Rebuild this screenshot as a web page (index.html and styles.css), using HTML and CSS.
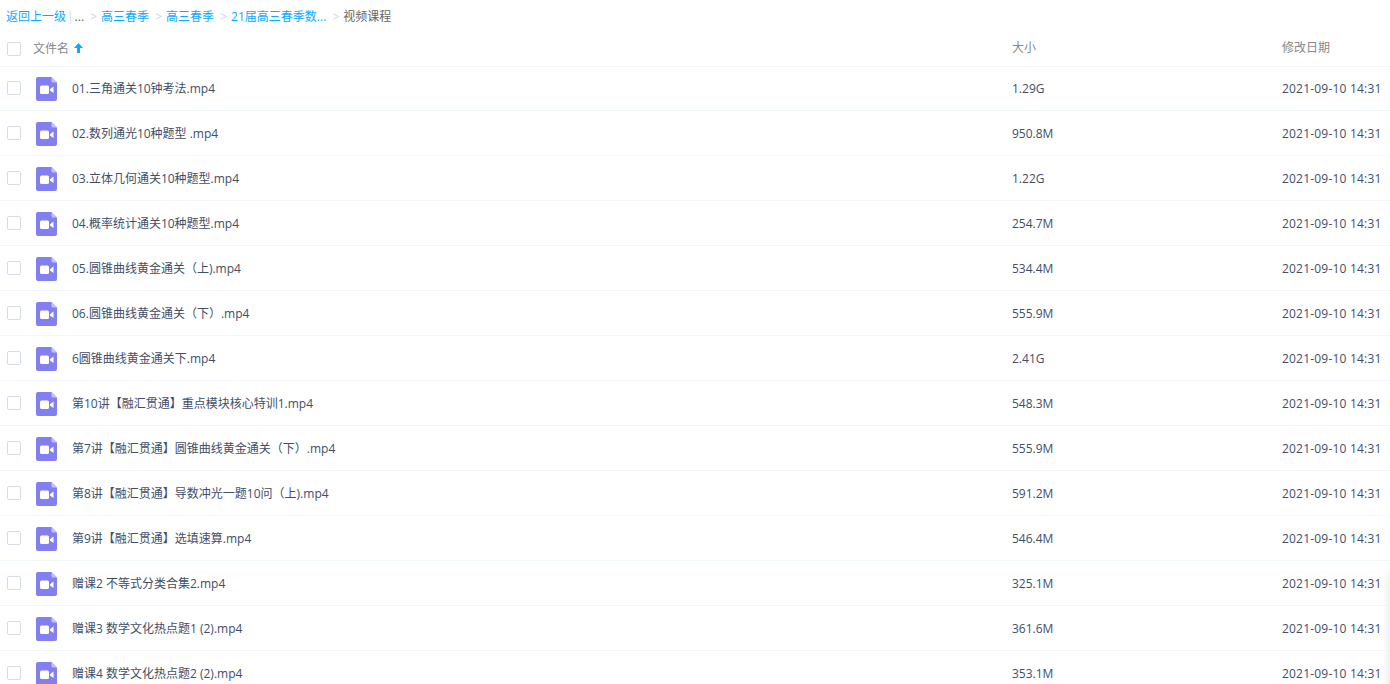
FILE: index.html
```html
<!DOCTYPE html>
<html lang="zh-CN">
<head>
  <meta charset="UTF-8" />
  <title>视频课程</title>
  <link rel="stylesheet" href="styles.css">
</head>
<body>

<svg class="defs" width="0" height="0">
  <symbol id="videoIcon" viewBox="0 0 21 24">
    <path d="M2 0H15.5L21 5.5V22a2 2 0 0 1-2 2H2a2 2 0 0 1-2-2V2a2 2 0 0 1 2-2z" fill="#8280f0"/>
    <path d="M15.5 0L21 5.5H17a1.5 1.5 0 0 1-1.5-1.5z" fill="#c3c2f8"/>
    <rect x="4" y="8.5" width="9" height="8.5" rx="1.5" fill="#fff"/>
    <path d="M14 12.2L17.5 9.6V16L14 13.6z" fill="#fff"/>
  </symbol>
</svg>

<div class="crumbs">
  <a href="#">返回上一级</a><span class="bar">|</span><span class="dots">...</span>
  <span class="sep">&gt;</span><a href="#">高三春季</a>
  <span class="sep">&gt;</span><a href="#">高三春季</a>
  <span class="sep">&gt;</span><a href="#">21届高三春季数...</a>
  <span class="sep">&gt;</span><span class="current">视频课程</span>
</div>

<div class="file-list">
  <div class="row head">
    <span class="check"></span>
    <span class="name">文件名 <span class="arrow">
      <svg width="9" height="10" viewBox="0 0 9 10"><path d="M4.5 0L9 5H6V10H3V5H0z" fill="#09aaff"/></svg>
    </span></span>
    <span class="size">大小</span>
    <span class="date">修改日期</span>
  </div>

  <div class="row"><span class="check"></span><svg class="icon"><use href="#videoIcon"/></svg><span class="name">01.三角通关10钟考法.mp4</span><span class="size">1.29G</span><span class="date">2021-09-10 14:31</span></div>
  <div class="row"><span class="check"></span><svg class="icon"><use href="#videoIcon"/></svg><span class="name">02.数列通光10种题型 .mp4</span><span class="size">950.8M</span><span class="date">2021-09-10 14:31</span></div>
  <div class="row"><span class="check"></span><svg class="icon"><use href="#videoIcon"/></svg><span class="name">03.立体几何通关10种题型.mp4</span><span class="size">1.22G</span><span class="date">2021-09-10 14:31</span></div>
  <div class="row"><span class="check"></span><svg class="icon"><use href="#videoIcon"/></svg><span class="name">04.概率统计通关10种题型.mp4</span><span class="size">254.7M</span><span class="date">2021-09-10 14:31</span></div>
  <div class="row"><span class="check"></span><svg class="icon"><use href="#videoIcon"/></svg><span class="name">05.圆锥曲线黄金通关（上).mp4</span><span class="size">534.4M</span><span class="date">2021-09-10 14:31</span></div>
  <div class="row"><span class="check"></span><svg class="icon"><use href="#videoIcon"/></svg><span class="name">06.圆锥曲线黄金通关（下）.mp4</span><span class="size">555.9M</span><span class="date">2021-09-10 14:31</span></div>
  <div class="row"><span class="check"></span><svg class="icon"><use href="#videoIcon"/></svg><span class="name">6圆锥曲线黄金通关下.mp4</span><span class="size">2.41G</span><span class="date">2021-09-10 14:31</span></div>
  <div class="row"><span class="check"></span><svg class="icon"><use href="#videoIcon"/></svg><span class="name">第10讲【融汇贯通】重点模块核心特训1.mp4</span><span class="size">548.3M</span><span class="date">2021-09-10 14:31</span></div>
  <div class="row"><span class="check"></span><svg class="icon"><use href="#videoIcon"/></svg><span class="name">第7讲【融汇贯通】圆锥曲线黄金通关（下）.mp4</span><span class="size">555.9M</span><span class="date">2021-09-10 14:31</span></div>
  <div class="row"><span class="check"></span><svg class="icon"><use href="#videoIcon"/></svg><span class="name">第8讲【融汇贯通】导数冲光一题10问（上).mp4</span><span class="size">591.2M</span><span class="date">2021-09-10 14:31</span></div>
  <div class="row"><span class="check"></span><svg class="icon"><use href="#videoIcon"/></svg><span class="name">第9讲【融汇贯通】选填速算.mp4</span><span class="size">546.4M</span><span class="date">2021-09-10 14:31</span></div>
  <div class="row"><span class="check"></span><svg class="icon"><use href="#videoIcon"/></svg><span class="name">赠课2 不等式分类合集2.mp4</span><span class="size">325.1M</span><span class="date">2021-09-10 14:31</span></div>
  <div class="row"><span class="check"></span><svg class="icon"><use href="#videoIcon"/></svg><span class="name">赠课3 数学文化热点题1 (2).mp4</span><span class="size">361.6M</span><span class="date">2021-09-10 14:31</span></div>
  <div class="row"><span class="check"></span><svg class="icon"><use href="#videoIcon"/></svg><span class="name">赠课4 数学文化热点题2 (2).mp4</span><span class="size">353.1M</span><span class="date">2021-09-10 14:31</span></div>
</div>

<div class="edge"></div>

</body>
</html>
```

FILE: styles.css
```css
html, body {
  height: 684px;
  overflow: hidden;
}
body {
  margin: 0;
  background-color: #fff;
  font-family: "Open Sans", "Noto Sans CJK SC", sans-serif;
  font-size: 12px;
  color: #424e67;
}
a {
  color: #09aaff;
  text-decoration: none;
}
.defs {
  position: absolute;
}
.crumbs {
  height: 33px;
  line-height: 33px;
  padding-left: 6px;
  color: #666;
  white-space: nowrap;
}
.crumbs .bar {
  color: #c4d8f4;
  margin: 0 1px;
}
.crumbs .sep {
  color: #c4d8f4;
  margin: 0 4px 0 3px;
}
.row {
  display: flex;
  align-items: center;
  height: 44px;
  border-bottom: 1px solid #f2f6fd;
  white-space: nowrap;
}
.row.head {
  height: 32px;
  padding-bottom: 1px;
  color: #888;
}
.head + .row {
  height: 43px;
}
.head + .row .check {
  margin-bottom: 1px;
}
.head + .row .name {
  margin-bottom: 2px;
}
.check {
  width: 12px;
  height: 12px;
  margin-left: 7px;
  border: 1px solid #d5dce8;
  border-radius: 2px;
  flex: none;
}
.icon {
  width: 21px;
  height: 24px;
  margin: 1px 0 0 15px;
  flex: none;
}
.name {
  flex: none;
  width: 940px;
  margin-left: 15px;
}
.head .name {
  width: 979px;
  margin: 0 0 2px 12px;
}
.arrow svg {
  margin-left: 2px;
}
.size {
  flex: none;
  width: 270px;
}
.date {
  flex: none;
}
.head .size, .head .date {
  margin-bottom: 4px;
}
.row:not(.head) .date {
  letter-spacing: 0.2px;
}
.edge {
  position: absolute;
  right: 0;
  top: 565px;
  width: 7px;
  height: 119px;
  background: linear-gradient(to right, rgba(238, 238, 238, 0), #efefef);
  -webkit-mask-image: linear-gradient(to bottom, transparent, #000 20px);
  mask-image: linear-gradient(to bottom, transparent, #000 20px);
}
```
